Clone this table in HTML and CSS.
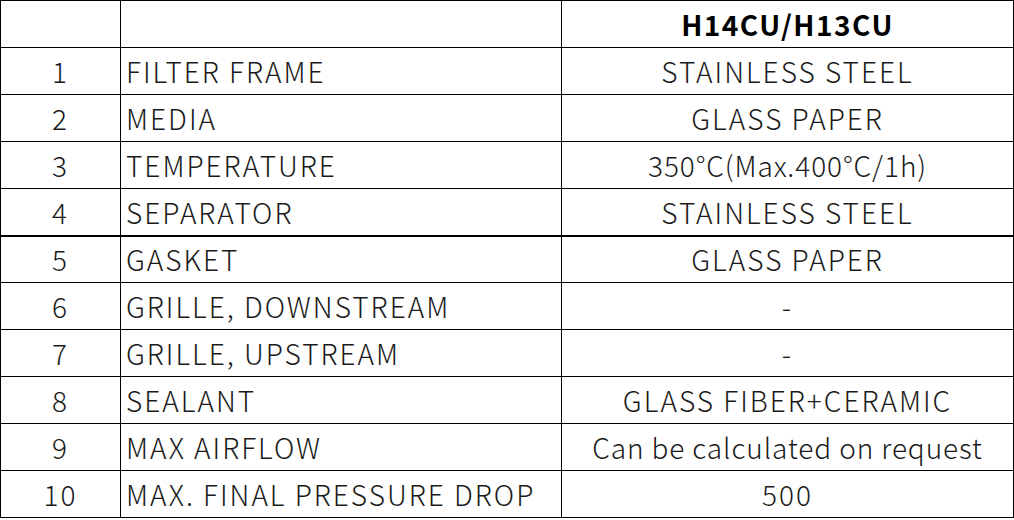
FILE: index.html
```html
<!DOCTYPE html>
<html>
<head>
<meta charset="utf-8">
<link rel="stylesheet" href="styles.css">
</head>
<body>
<table class="spec">
  <colgroup>
    <col class="c-no">
    <col class="c-item">
    <col class="c-val">
  </colgroup>
  <tr class="head"><td></td><td></td><td class="val title">H14CU/H13CU</td></tr>
  <tr><td class="no">1</td><td class="item">FILTER FRAME</td><td class="val">STAINLESS STEEL</td></tr>
  <tr><td class="no">2</td><td class="item">MEDIA</td><td class="val">GLASS PAPER</td></tr>
  <tr><td class="no">3</td><td class="item">TEMPERATURE</td><td class="val mixed">350°C(Max.400°C/1h)</td></tr>
  <tr class="thick"><td class="no">4</td><td class="item">SEPARATOR</td><td class="val">STAINLESS STEEL</td></tr>
  <tr><td class="no">5</td><td class="item">GASKET</td><td class="val">GLASS PAPER</td></tr>
  <tr><td class="no">6</td><td class="item">GRILLE, DOWNSTREAM</td><td class="val">-</td></tr>
  <tr><td class="no">7</td><td class="item">GRILLE, UPSTREAM</td><td class="val">-</td></tr>
  <tr><td class="no">8</td><td class="item">SEALANT</td><td class="val">GLASS FIBER+CERAMIC</td></tr>
  <tr><td class="no">9</td><td class="item">MAX AIRFLOW</td><td class="val mixed">Can be calculated on request</td></tr>
  <tr><td class="no">10</td><td class="item">MAX. FINAL PRESSURE DROP</td><td class="val">500</td></tr>
</table>
</body>
</html>
```
FILE: styles.css
```css
html, body {
  margin: 0;
  padding: 0;
  background: #fff;
}
.spec {
  border-collapse: collapse;
  table-layout: fixed;
  width: 1013px;
  font-family: "Noto Sans CJK JP", "Noto Sans", sans-serif;
  font-size: 28px;
  font-weight: 300;
  letter-spacing: 2px;
  color: #1a1a1a;
}
.c-no { width: 120px; }
.c-item { width: 441px; }
.c-val { width: 452px; }
.spec tr { height: 47px; }
.spec td {
  border: 1px solid #000;
  padding: 0 5px;
  line-height: 1;
  vertical-align: middle;
  white-space: nowrap;
}
.spec td.no, .spec td.val { text-align: center; }
.spec td.mixed { letter-spacing: 0.9px; }
.spec td.title { font-weight: 700; color: #000; letter-spacing: 1.5px; }
.spec tr.thick td { border-bottom: 2px solid #000; }
```
